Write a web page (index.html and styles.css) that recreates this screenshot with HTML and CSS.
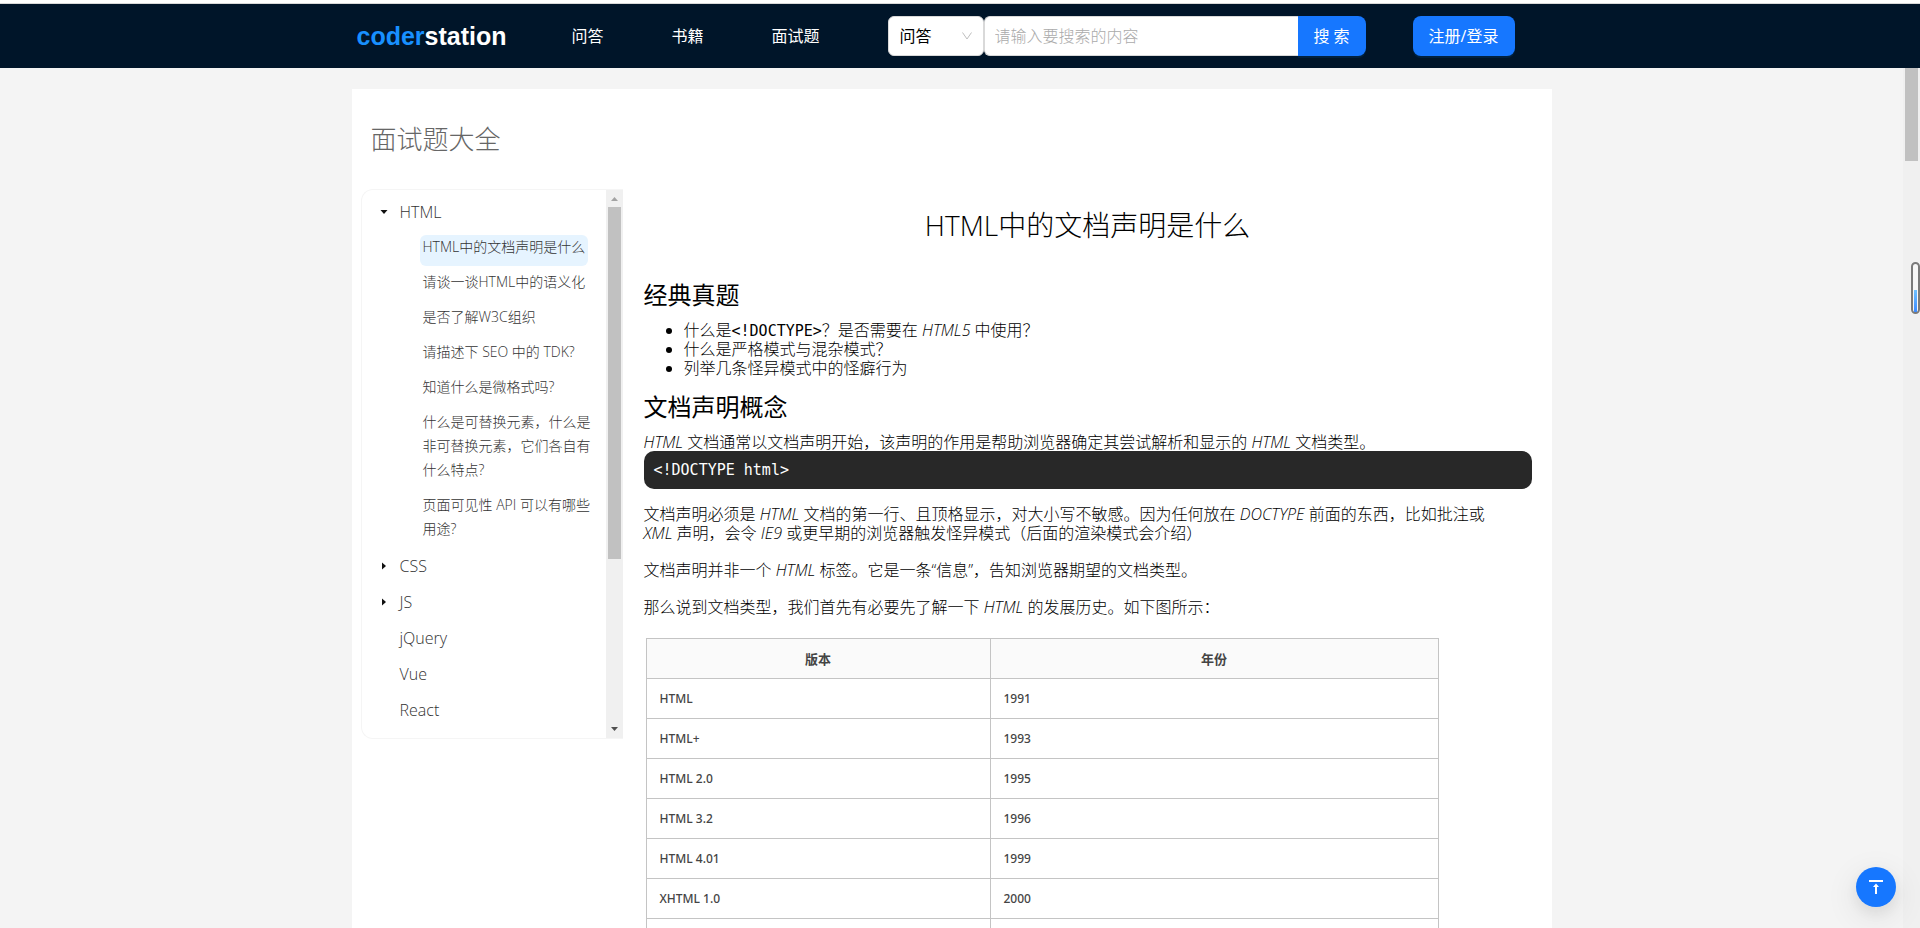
FILE: index.html
```html
<!DOCTYPE html>
<html lang="zh-CN">
<head>
<meta charset="utf-8">
<title>coderstation</title>
<link rel="stylesheet" href="styles.css">
</head>
<body>
<div class="app">
  <header class="header">
    <div class="header-inner">
      <a class="logo" href="#"><span class="logo-accent">coder</span>station</a>
      <nav class="nav">
        <a href="#">问答</a>
        <a href="#">书籍</a>
        <a href="#">面试题</a>
      </nav>
      <form class="search">
        <div class="select-wrap">
          <select class="select" aria-label="搜索类型"><option>问答</option><option>书籍</option></select>
          <svg class="chevron" viewBox="0 0 12 12" aria-hidden="true"><path d="M1.500 2.500 6 9l4.500-6.500" fill="none" stroke="currentColor"/></svg>
        </div>
        <input class="search-input" type="text" placeholder="请输入要搜索的内容" aria-label="搜索内容">
        <button class="search-button" type="button">搜 索</button>
      </form>
      <button class="login" type="button">注册/登录</button>
    </div>
  </header>

  <div class="viewport">
    <main class="scroll-area">
      <div class="content">
        <h2 class="page-title">面试题大全</h2>
        <div class="columns">
          <aside class="tree-box">
            <ul class="tree">
              <li class="node">
                <div class="row"><svg class="caret" viewBox="0 0 10 10" aria-hidden="true"><path d="M1.500 3h7L5 7z"/></svg><a href="#">HTML</a></div>
                <ul class="children">
                  <li><a class="leaf active" href="#">HTML中的文档声明是什么</a></li>
                  <li><a class="leaf" href="#">请谈一谈HTML中的语义化</a></li>
                  <li><a class="leaf" href="#">是否了解W3C组织</a></li>
                  <li><a class="leaf" href="#">请描述下 SEO 中的 TDK?</a></li>
                  <li><a class="leaf" href="#">知道什么是微格式吗?</a></li>
                  <li><a class="leaf" href="#">什么是可替换元素，什么是非可替换元素，它们各自有什么特点?</a></li>
                  <li><a class="leaf" href="#">页面可见性 API 可以有哪些用途?</a></li>
                </ul>
              </li>
              <li class="node"><div class="row"><svg class="caret" viewBox="0 0 10 10" aria-hidden="true"><path d="M3 1.500v7L7 5z"/></svg><a href="#">CSS</a></div></li>
              <li class="node"><div class="row"><svg class="caret" viewBox="0 0 10 10" aria-hidden="true"><path d="M3 1.500v7L7 5z"/></svg><a href="#">JS</a></div></li>
              <li class="node"><div class="row"><span class="caret"></span><a href="#">jQuery</a></div></li>
              <li class="node"><div class="row"><span class="caret"></span><a href="#">Vue</a></div></li>
              <li class="node"><div class="row"><span class="caret"></span><a href="#">React</a></div></li>
            </ul>
            <div class="tree-scrollbar">
              <svg class="scroll-arrow muted" viewBox="0 0 17 17" aria-hidden="true"><path d="M5 11h7L8.500 7z"/></svg>
              <div class="track"><div class="tree-thumb"></div></div>
              <svg class="scroll-arrow" viewBox="0 0 17 17" aria-hidden="true"><path d="M5 6h7l-3.500 4z"/></svg>
            </div>
          </aside>

          <article class="article">
            <h1 class="article-title">HTML中的文档声明是什么</h1>
            <h2>经典真题</h2>
            <ul class="questions">
              <li>什么是<code>&lt;!DOCTYPE&gt;</code>？是否需要在 <em>HTML5</em> 中使用？</li>
              <li>什么是严格模式与混杂模式？</li>
              <li>列举几条怪异模式中的怪癖行为</li>
            </ul>
            <h2>文档声明概念</h2>
            <p class="lead"><em>HTML</em> 文档通常以文档声明开始，该声明的作用是帮助浏览器确定其尝试解析和显示的 <em>HTML</em> 文档类型。</p>
            <pre class="code-block"><code>&lt;!DOCTYPE html&gt;</code></pre>
            <p>文档声明必须是 <em>HTML</em> 文档的第一行、且顶格显示，对大小写不敏感。因为任何放在 <em>DOCTYPE</em> 前面的东西，比如批注或 <em>XML</em> 声明，会令 <em>IE9</em> 或更早期的浏览器触发怪异模式（后面的渲染模式会介绍）</p>
            <p>文档声明并非一个 <em>HTML</em> 标签。它是一条“信息”，告知浏览器期望的文档类型。</p>
            <p>那么说到文档类型，我们首先有必要先了解一下 <em>HTML</em> 的发展历史。如下图所示：</p>
            <table class="versions">
              <colgroup><col class="col-version"><col></colgroup>
              <thead><tr><th>版本</th><th>年份</th></tr></thead>
              <tbody>
                <tr><td>HTML</td><td>1991</td></tr>
                <tr><td>HTML+</td><td>1993</td></tr>
                <tr><td>HTML 2.0</td><td>1995</td></tr>
                <tr><td>HTML 3.2</td><td>1996</td></tr>
                <tr><td>HTML 4.01</td><td>1999</td></tr>
                <tr><td>XHTML 1.0</td><td>2000</td></tr>
                <tr><td></td><td></td></tr>
              </tbody>
            </table>
          </article>
        </div>
      </div>
    </main>
    <div class="page-scrollbar"><div class="page-thumb"></div></div>
  </div>
</div>

<div class="side-meter"><div class="side-meter-fill"></div></div>
<button class="back-top" type="button" aria-label="回到顶部">
  <svg viewBox="0 0 20 20" aria-hidden="true"><path d="M3 3h14v2H3zM10 6.500l3 3.500h-2v7H9v-7H7z"/></svg>
</button>
</body>
</html>
```
FILE: styles.css
```css
* {
  box-sizing: border-box;
}

body {
  margin: 0;
  font-family: "Open Sans", "Noto Sans CJK SC", sans-serif;
  font-size: 16px;
  font-weight: 300;
  line-height: 19px;
  color: #000;
}

a {
  color: inherit;
  text-decoration: none;
}

button,
input,
select {
  font: inherit;
}

ul {
  margin: 0;
  padding: 0;
  list-style: none;
}

.app {
  display: flex;
  flex-direction: column;
  height: 100vh;
  border-top: 3px solid #fff;
}

/* Header */
.header {
  flex: none;
  padding-right: 17px;
  background: #001529;
  border-top: 1px solid #d9d9d9;
}

.header-inner {
  display: flex;
  align-items: center;
  max-width: 1200px;
  height: 64px;
  margin: 0 auto;
  padding-left: 5px;
  font-weight: 400;
  color: #fff;
}

.logo {
  width: 215px;
  font: bold 25px/32px "Liberation Sans", Arial, sans-serif;
}

.logo-accent {
  color: #1890ff;
}

.nav {
  display: flex;
  gap: 68px;
  width: 316px;
}

.search {
  display: flex;
  width: 478px;
  height: 40px;
}

.select-wrap {
  display: grid;
  width: 96px;
}

.select,
.chevron {
  grid-area: 1 / 1;
}

.select {
  appearance: none;
  padding: 0 11px;
  border: 1px solid #d9d9d9;
  border-radius: 6px;
  background: #fff;
  color: #000;
}

.chevron {
  justify-self: end;
  align-self: center;
  width: 12px;
  height: 12px;
  margin-right: 11px;
  color: #bfbfbf;
  pointer-events: none;
}

.search-input {
  flex: 1;
  min-width: 0;
  padding: 0 10px;
  border: 1px solid #d9d9d9;
  border-right: 0;
  border-radius: 6px 0 0 6px;
  background: #fff;
  font-weight: 300;
}

.search-input::placeholder {
  color: #aaa;
}

.search-button,
.login {
  height: 40px;
  border: 0;
  background: #1677ff;
  color: #fff;
  box-shadow: 0 2px 0 rgba(5, 145, 255, 0.1);
}

.search-button {
  width: 68px;
  border-radius: 0 8px 8px 0;
}

.login {
  width: 102px;
  margin-left: 47px;
  padding: 0;
  border-radius: 8px;
}

/* Page body */
.viewport {
  display: flex;
  flex: 1;
  min-height: 0;
}

.scroll-area {
  flex: 1;
  overflow: hidden;
  padding-top: 21px;
  background: #f4f4f4;
}

.content {
  max-width: 1200px;
  min-height: 100%;
  margin: 0 auto;
  padding: 30px 20px 0 9px;
  background: #fff;
}

.page-title {
  margin: 0;
  padding-left: 10px;
  font-size: 26px;
  font-weight: 300;
  line-height: 40px;
  color: #666;
}

.columns {
  display: flex;
  align-items: flex-start;
  gap: 21px;
  margin-top: 30px;
}

.page-scrollbar {
  width: 17px;
  padding: 0 2px;
  background: #f0f0f0;
}

.page-thumb {
  height: 93px;
  background: #c1c1c1;
}

/* Question tree */
.tree-box {
  display: flex;
  flex: none;
  width: 262px;
  height: 550px;
  overflow: hidden;
  border: 1px solid #f5f5f5;
  border-right: 0;
  border-radius: 12px 0 0 12px;
}

.tree {
  flex: 1;
  padding: 7px 10px 0 13px;
  color: #333;
}

.node {
  margin-bottom: 6px;
}

.row {
  display: flex;
  align-items: center;
  height: 30px;
}

.row a {
  padding-left: 7px;
}

.caret {
  width: 18px;
  height: 10px;
  fill: #111;
}

.children {
  margin-bottom: -3px;
  padding: 8px 0 0 45px;
}

.children li {
  display: flex;
  margin-bottom: 4px;
}

.children li:last-child {
  margin-bottom: 0;
}

.leaf {
  padding: 0 3px 7px;
  border-radius: 6px;
  font-size: 14px;
  line-height: 24px;
}

.leaf.active {
  background: #e6f4ff;
}

.tree-scrollbar {
  display: flex;
  flex-direction: column;
  width: 17px;
  background: #f0f0f0;
}

.scroll-arrow {
  width: 17px;
  height: 17px;
  fill: #505050;
}

.scroll-arrow.muted {
  fill: #a3a3a3;
}

.track {
  flex: 1;
  padding: 0 2px;
}

.tree-thumb {
  height: 352px;
  background: #c1c1c1;
}

/* Article */
.article {
  flex: 1;
  min-width: 0;
}

.article-title {
  margin: 16px 0 35px;
  font-size: 28px;
  font-weight: 300;
  line-height: 40px;
  text-align: center;
}

.article h2 {
  margin: 0 0 11px;
  font-size: 24px;
  font-weight: 400;
  line-height: 30px;
}

.article p {
  margin: 0 0 18px;
  padding-right: 20px;
}

.article .lead {
  height: 19px;
  margin: 0 0 -1px;
}

.questions {
  margin-bottom: 14px;
  padding-left: 40px;
  list-style: disc;
}

code {
  font: 400 15px/15px "DejaVu Sans Mono", "Liberation Mono", monospace;
}

.code-block {
  margin: 0 0 16px;
  padding: 10px 10px 9px;
  border-radius: 10px;
  background: #282828;
  color: #fff;
}

.code-block code {
  display: block;
  line-height: 19px;
}

.versions {
  width: 793px;
  margin: 21px 0 0 2px;
  border-collapse: collapse;
  table-layout: fixed;
  font: 500 12px/18px "Noto Sans", "Noto Sans CJK SC", sans-serif;
  color: #444;
}

.col-version {
  width: 344px;
}

.versions th,
.versions td {
  height: 40px;
  padding: 0 13px;
  border: 1px solid #c4c4c4;
}

.versions th {
  background: #fafafa;
  font-size: 13px;
  font-weight: 700;
}

/* Floating controls */
.side-meter {
  position: fixed;
  top: 262px;
  right: 0;
  width: 9px;
  height: 52px;
  padding: 26px 1px 0;
  border: 2px solid #7a7a7a;
  border-radius: 5px;
  background: #f7f7f7;
}

.side-meter-fill {
  height: 22px;
  background: linear-gradient(#6ec1ff, #3d8bff);
}

.back-top {
  position: fixed;
  right: 24px;
  bottom: 21px;
  display: grid;
  place-items: center;
  width: 40px;
  height: 40px;
  padding: 0;
  border: 0;
  border-radius: 50%;
  background: #1677ff;
  box-shadow: 0 6px 16px rgba(0, 0, 0, 0.08), 0 9px 28px 8px rgba(0, 0, 0, 0.05);
}

.back-top svg {
  width: 20px;
  height: 20px;
  fill: #fff;
}
```
